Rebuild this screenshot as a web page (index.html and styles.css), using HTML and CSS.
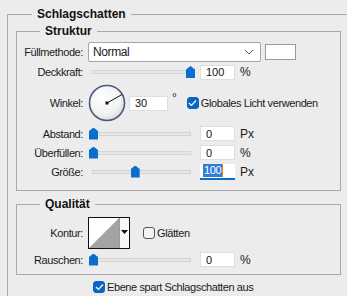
FILE: index.html
```html
<!DOCTYPE html>
<html lang="de">
<head>
  <meta charset="UTF-8" />
  <title>Ebenenstil - Schlagschatten</title>
  <link rel="stylesheet" href="styles.css">
</head>
<body>
  <fieldset class="group group-main">
    <legend>Schlagschatten</legend>

    <!-- Struktur -->
    <fieldset class="group group-sub">
      <legend>Struktur</legend>

      <div class="row row-tall">
        <label class="lbl">Füllmethode:</label>
        <div class="select">
          <span>Normal</span>
          <svg class="chevron" width="10" height="6" viewBox="0 0 10 6"><path d="M1 1 L5 5 L9 1" fill="none" stroke="#555" stroke-width="1"/></svg>
        </div>
        <div class="swatch"></div>
      </div>

      <div class="row row-tall">
        <label class="lbl">Deckkraft:</label>
        <div class="slider"><span class="thumb" style="left:100%"></span></div>
        <input class="num" type="text" value="100">
        <span class="unit">%</span>
      </div>

      <div class="row row-angle">
        <label class="lbl">Winkel:</label>
        <svg class="dial" width="38" height="38" viewBox="0 0 38 38">
          <defs>
            <radialGradient id="dialFill" cx="40%" cy="35%" r="70%">
              <stop offset="0" stop-color="#ffffff"/>
              <stop offset="0.7" stop-color="#f1f1f1"/>
              <stop offset="1" stop-color="#d6d6d6"/>
            </radialGradient>
          </defs>
          <circle cx="19" cy="19" r="17.5" fill="url(#dialFill)" stroke="#4b5a82" stroke-width="1.6"/>
          <line x1="19" y1="19" x2="34" y2="10.5" stroke="#111" stroke-width="1"/>
          <rect x="17.5" y="17.5" width="3" height="3" fill="#111"/>
        </svg>
        <input class="num num-angle" type="text" value="30">
        <span class="unit unit-deg">°</span>
        <label class="check">
          <span class="box checked"><svg width="9" height="8" viewBox="0 0 9 8"><path d="M1 4 L3.5 6.5 L8 1.5" fill="none" stroke="#fff" stroke-width="1.2"/></svg></span>
          Globales Licht verwenden
        </label>
      </div>

      <div class="row">
        <label class="lbl">Abstand:</label>
        <div class="slider"><span class="thumb" style="left:0%"></span></div>
        <input class="num" type="text" value="0">
        <span class="unit">Px</span>
      </div>

      <div class="row">
        <label class="lbl">Überfüllen:</label>
        <div class="slider"><span class="thumb" style="left:0%"></span></div>
        <input class="num" type="text" value="0">
        <span class="unit">%</span>
      </div>

      <div class="row">
        <label class="lbl">Größe:</label>
        <div class="slider"><span class="thumb" style="left:43%"></span></div>
        <div class="num num-focus"><span class="sel">100</span><span class="caret"></span></div>
        <span class="unit">Px</span>
      </div>
    </fieldset>

    <!-- Qualität -->
    <fieldset class="group group-sub group-quality">
      <legend>Qualität</legend>

      <div class="row row-contour">
        <label class="lbl">Kontur:</label>
        <div class="contour">
          <svg class="contour-preview" width="30" height="30" viewBox="0 0 30 30">
            <rect width="30" height="30" fill="#fff"/>
            <polygon points="0,30 30,0 30,30" fill="#a3a3a3"/>
          </svg>
          <div class="contour-arrow">
            <svg width="7" height="4" viewBox="0 0 7 4"><polygon points="0,0 7,0 3.5,4" fill="#111"/></svg>
          </div>
        </div>
        <label class="check check-smooth">
          <span class="box"></span>
          Glätten
        </label>
      </div>

      <div class="row">
        <label class="lbl">Rauschen:</label>
        <div class="slider"><span class="thumb" style="left:0%"></span></div>
        <input class="num" type="text" value="0">
        <span class="unit">%</span>
      </div>
    </fieldset>

    <div class="row row-knockout">
      <label class="check">
        <span class="box checked"><svg width="9" height="8" viewBox="0 0 9 8"><path d="M1 4 L3.5 6.5 L8 1.5" fill="none" stroke="#fff" stroke-width="1.2"/></svg></span>
        Ebene spart Schlagschatten aus
      </label>
    </div>
  </fieldset>
</body>
</html>
```

FILE: styles.css
```css
/* ---------- Global ---------- */
* {
  box-sizing: border-box;
}
html, body {
  margin: 0;
  height: 100%;
  overflow: hidden;
}
body {
  background-color: #ececec;
  color: #1b1b1b;
  font-family: "Liberation Sans", Arial, sans-serif;
  font-size: 11px;
  letter-spacing: -0.4px;
}

/* ---------- Group boxes ---------- */
.group {
  border: 1px solid #a9a9a9;
  margin: 0;
  min-width: 0;
}
.group legend {
  font-weight: bold;
  font-size: 12px;
  line-height: 14px;
  padding: 0 5px;
  color: #111;
  letter-spacing: 0;
}
.group-main {
  margin: 7px 0 0 7px;
  width: 360px;
  height: 320px;
  padding: 3px 0 0 8px;
}
.group-main > legend {
  margin-left: 16px;
}
.group-sub {
  width: 325px;
  padding: 4px 0 9px 0;
}
.group-sub > legend {
  margin-left: 23px;
}
.group-quality {
  margin-top: 6px;
  padding: 4px 0 5px 0;
}

/* ---------- Rows ---------- */
.row {
  display: flex;
  align-items: center;
  height: 19px;
}
.row-tall {
  height: 20px;
}
.row-angle {
  height: 42px;
}
.row-contour {
  height: 35px;
}
.lbl {
  width: 66px;
  text-align: right;
  margin-right: 5px;
  white-space: nowrap;
}

/* ---------- Select & swatch ---------- */
.select {
  width: 173px;
  height: 20px;
  background: #fff;
  border: 1px solid #a5a5a5;
  border-radius: 2px;
  display: flex;
  align-items: center;
  justify-content: space-between;
  padding: 0 6px 0 4px;
  font-size: 12px;
}
.chevron {
  display: block;
}
.swatch {
  width: 31px;
  height: 16px;
  margin-left: 4px;
  background: #fff;
  border: 1px solid #9a9a9a;
}

/* ---------- Slider ---------- */
.slider {
  position: relative;
  width: 99px;
  height: 4px;
  margin-left: 4px;
  margin-right: 9px;
  background: #e6e6e6;
  border: 1px solid #d4d4d4;
}
.thumb {
  position: absolute;
  top: -5px;
  width: 9px;
  height: 12px;
  margin-left: -4px;
  background: #0a6ed1;
  clip-path: polygon(50% 0, 100% 30%, 100% 100%, 0 100%, 0 30%);
}

/* ---------- Number inputs ---------- */
.num {
  width: 35px;
  height: 15px;
  border: 1px solid #dedede;
  background: #fff;
  font-family: inherit;
  font-size: 11px;
  color: #111;
  padding: 0 0 0 5px;
  margin: 0;
  outline: none;
}
.num-angle {
  width: 39px;
  margin-left: 3px;
}
.num-focus {
  display: flex;
  align-items: center;
  padding-left: 3px;
  border: none;
  border-bottom: 2px solid #0a6ed1;
  height: 16px;
}
.sel {
  background: #2f7fd6;
  color: #fff;
  line-height: 13px;
  padding: 0 1px;
}
.caret {
  width: 1px;
  height: 13px;
  background: #f07a1a;
}
.unit {
  margin-left: 5px;
  font-size: 12px;
  letter-spacing: 0;
}
.unit-deg {
  margin-left: 4px;
  margin-right: 10px;
  align-self: flex-start;
  margin-top: 9px;
}

/* ---------- Angle dial ---------- */
.dial {
  display: block;
}

/* ---------- Checkboxes ---------- */
.check {
  display: flex;
  align-items: center;
  gap: 2px;
  font-size: 11px;
}
.box {
  width: 12px;
  height: 12px;
  border: 1px solid #555;
  border-radius: 3px;
  background: #f3f3f3;
  display: flex;
  align-items: center;
  justify-content: center;
}
.box.checked {
  background: #0a66c2;
  border-color: #0a66c2;
}
.check-smooth {
  margin-left: 13px;
}

/* ---------- Contour picker ---------- */
.contour {
  display: flex;
  width: 42px;
  height: 32px;
  border: 1px solid #111;
  background: #fff;
}
.contour-preview {
  display: block;
}
.contour-arrow {
  flex: 1;
  border-left: 1px solid #999;
  background: #f7f7f7;
  display: flex;
  align-items: center;
  justify-content: center;
  padding-bottom: 2px;
}
.contour-arrow svg {
  display: block;
}

/* ---------- Footer checkbox ---------- */
.row-knockout {
  height: 24px;
  padding-left: 77px;
}
```
